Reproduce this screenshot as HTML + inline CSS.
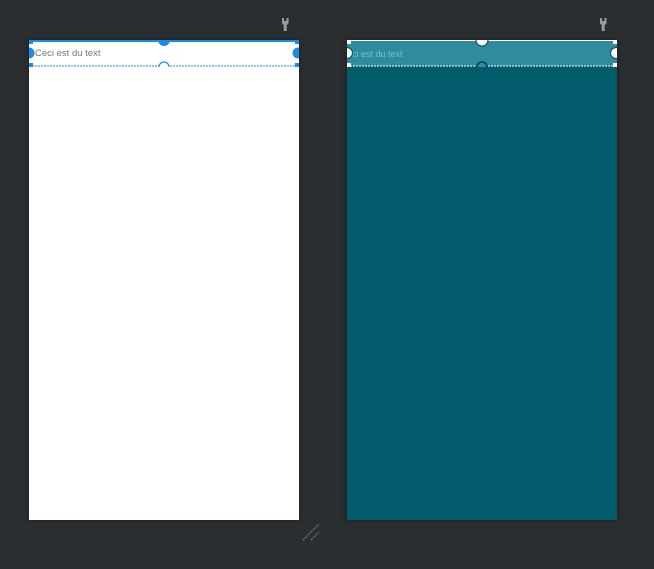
<!DOCTYPE html>
<html><head><style>
body{margin:0;width:654px;height:569px;background:#2b2e31;position:relative;overflow:hidden;font-family:"Liberation Sans",sans-serif}
.p{position:absolute;top:40px;width:270px;height:480px;box-shadow:0 0 4px rgba(0,0,0,.5)}
</style></head><body>
<div class="p" style="left:29px;background:#fff"></div>
<div class="p" style="left:347px;background:#025c6b"></div>
<svg width="654" height="569" style="position:absolute;left:0;top:0">
<rect x="29" y="40" width="270" height="2" fill="#1a8de6"/>
<line x1="29" y1="66" x2="299" y2="66" stroke="#1a8de6" stroke-dasharray="2,1"/>
<text x="35" y="56" font-size="9.5" fill="#777" font-family="Liberation Sans">Ceci est du text</text>
<clipPath id="c1"><rect x="29" y="40" width="270" height="27"/></clipPath>
<g clip-path="url(#c1)">
<circle cx="164" cy="40" r="6" fill="#1a8de6"/>
<circle cx="29" cy="53" r="5.5" fill="#1a8de6"/>
<circle cx="298" cy="53" r="5.5" fill="#1a8de6"/>
<circle cx="164" cy="67" r="5" fill="#fff" stroke="#1a8de6" stroke-width="1.2"/>
</g>
<rect x="29" y="40" width="4" height="4" fill="#1a8de6"/><rect x="295" y="40" width="4" height="4" fill="#1a8de6"/>
<rect x="29" y="63" width="4" height="4" fill="#1a8de6"/><rect x="295" y="63" width="4" height="4" fill="#1a8de6"/>
<rect x="347" y="40" width="270" height="26" fill="#2f8c9c"/>
<rect x="347" y="40" width="270" height="1" fill="#fff"/>
<line x1="347" y1="66" x2="617" y2="66" stroke="#fff" stroke-dasharray="2,1"/>
<text x="352" y="57" font-size="9" fill="#6cc4d2" font-family="Liberation Sans">ci est du text</text>
<clipPath id="c2"><rect x="347" y="40" width="270" height="27"/></clipPath>
<g clip-path="url(#c2)">
<circle cx="482" cy="40" r="6" fill="#fff" stroke="#0b5563" stroke-width="1.2"/>
<circle cx="347" cy="53" r="5.5" fill="#fff" stroke="#0b5563" stroke-width="1.2"/>
<circle cx="616" cy="53" r="5.5" fill="#fff" stroke="#0b5563" stroke-width="1.2"/>
<circle cx="482" cy="67" r="5" fill="#2f8c9c" stroke="#0b3a44" stroke-width="1.5"/>
</g>
<rect x="347" y="40" width="4" height="4" fill="#fff"/><rect x="613" y="40" width="4" height="4" fill="#fff"/>
<rect x="347" y="63" width="4" height="4" fill="#fff"/><rect x="613" y="63" width="4" height="4" fill="#fff"/>
<g fill="#9a9a9a">
<path d="M282 18h2v3h2.5v-3h2v5.5l-1.8 1.5v6h-3v-6L282 23.5z"/>
<path d="M600 18h2v3h2.5v-3h2v5.5l-1.8 1.5v6h-3v-6L600 23.5z"/>
</g>
<line x1="303" y1="540" x2="319" y2="524" stroke="#888" stroke-width="1" stroke-dasharray="1.5,0.8"/>
<line x1="311" y1="540" x2="319" y2="532" stroke="#888" stroke-width="1" stroke-dasharray="1.5,0.8"/>
</svg>
</body></html>
